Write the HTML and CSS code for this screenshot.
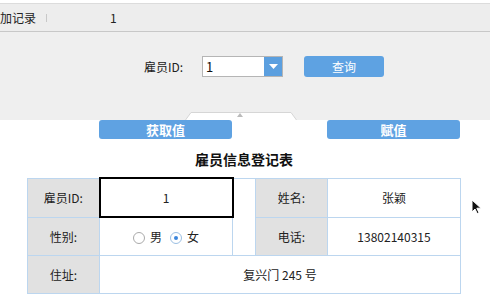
FILE: index.html
```html
<!DOCTYPE html>
<html lang="zh-CN">
<head>
    <meta charset="UTF-8">
    <title>雇员信息登记表</title>
    <link rel="stylesheet" href="styles.css">
</head>
<body>
    <div class="topbar">
        <span class="crumb">加记录</span>
        <span class="sep"></span>
        <span class="crumb-value">1</span>
    </div>
    <div class="query-panel">
        <div class="query-row">
            <label class="query-label">雇员ID:</label>
            <div class="select">
                <span class="select-value">1</span>
                <span class="select-arrow">
                    <svg width="9" height="5" viewBox="0 0 9 5"><path d="M0 0h9L4.5 5z" fill="#fff"/></svg>
                </span>
            </div>
            <button class="btn btn-query">查询</button>
        </div>
        <div class="handle">
            <svg width="112" height="8" viewBox="0 0 112 8">
                <path d="M0.5 8L6 0.5H106L111.5 8" fill="#fff" stroke="#d6d6d6"/>
                <path d="M52 5h6l-3-4z" fill="#bbb"/>
            </svg>
        </div>
    </div>
    <div class="sheet">
        <div class="actions">
            <button class="btn btn-action slot-a">获取值</button>
            <button class="btn btn-action slot-b">赋值</button>
        </div>
        <h1 class="title">雇员信息登记表</h1>
        <table class="form-table">
            <colgroup>
                <col class="c-label"><col class="c-value"><col class="c-gap"><col class="c-label"><col class="c-value">
            </colgroup>
            <tr>
                <td class="label">雇员ID:</td>
                <td class="value focused">1</td>
                <td class="gap" rowspan="2"></td>
                <td class="label">姓名:</td>
                <td class="value">张颖</td>
            </tr>
            <tr>
                <td class="label">性别:</td>
                <td class="value">
                    <span class="radio"></span><span class="radio-text first">男</span><span class="radio checked"></span><span class="radio-text">女</span>
                </td>
                <td class="label">电话:</td>
                <td class="value">13802140315</td>
            </tr>
            <tr>
                <td class="label">住址:</td>
                <td class="value" colspan="4">复兴门 245 号</td>
            </tr>
        </table>
    </div>
    <svg class="cursor" width="10" height="16" viewBox="0 0 10 16">
        <path d="M1 1v12l3-3 2.2 4.6 1.8-.9L5.8 9.2H10z" fill="#111" stroke="#fff" stroke-width="1"/>
    </svg>
</body>
</html>
```

FILE: styles.css
```css
body {
    margin: 0;
    background-color: #fff;
    color: #333;
    font-family: "Noto Sans CJK SC", "Liberation Sans", sans-serif;
    font-size: 12px;
    position: relative;
    overflow: hidden;
}
.topbar {
    margin-top: 3px;
    height: 27px;
    background-color: #ededed;
    border-top: 1px solid #dcdcdc;
    border-bottom: 1px solid #c8c8c8;
    display: flex;
    align-items: center;
    color: #222;
    font-size: 12px;
}
.crumb {
    margin-left: 0;
    width: 46px;
}
.sep {
    width: 1px;
    height: 8px;
    background-color: #c8c8c8;
}
.crumb-value {
    margin-left: 63px;
}
.query-panel {
    background-color: #efefef;
    height: 88px;
    display: flex;
    flex-direction: column;
}
.query-row {
    display: flex;
    align-items: center;
    padding-left: 144px;
    margin-top: 24px;
    height: 21px;
}
.query-label {
    width: 58px;
    color: #222;
}
.select {
    width: 79px;
    height: 19px;
    background-color: #fff;
    border: 1px solid #b5b5b5;
    display: flex;
    align-items: center;
}
.select-value {
    flex: 1;
    padding-left: 3px;
    font-size: 13px;
    color: #111;
}
.select-arrow {
    width: 18px;
    height: 19px;
    background-color: #5b9fdf;
    display: flex;
    align-items: center;
    justify-content: center;
}
.btn {
    border: none;
    border-radius: 3px;
    background-color: #5ea2e2;
    color: #fff;
    font-family: inherit;
    padding: 0;
    cursor: pointer;
}
.btn-query {
    margin-left: 21px;
    width: 80px;
    height: 21px;
    font-size: 12px;
}
.handle {
    margin-top: 35px;
    padding-left: 185px;
    height: 8px;
    line-height: 0;
}
.sheet {
    margin-left: 27px;
    width: 434px;
}
.actions {
    display: grid;
    grid-template-columns: 72px 133px 95px 133px;
    height: 19px;
}
.btn-action {
    height: 19px;
    font-size: 13px;
    font-weight: bold;
    background-color: #5fa2e2;
}
.slot-a {
    grid-column: 2;
}
.slot-b {
    grid-column: 4;
}
.title {
    margin: 0;
    height: 38px;
    line-height: 40px;
    text-align: center;
    font-size: 14px;
    font-weight: bold;
    color: #111;
}
.form-table {
    border-collapse: collapse;
    table-layout: fixed;
    width: 434px;
}
.c-label {
    width: 72px;
}
.c-value {
    width: 133px;
}
.c-gap {
    width: 23px;
}
.form-table td {
    border: 1px solid #bcd6ef;
    height: 37px;
    padding: 0;
    text-align: center;
    color: #222;
}
.form-table td.label {
    background-color: #e1e1e1;
}
.form-table td.focused {
    border: 2px solid #000;
}
.radio {
    display: inline-block;
    width: 10px;
    height: 10px;
    border: 1px solid #aaa;
    border-radius: 50%;
    background-color: #fff;
    vertical-align: -2px;
    position: relative;
}
.radio.checked {
    border-color: #9bbfe3;
}
.radio.checked::after {
    content: "";
    position: absolute;
    left: 3px;
    top: 3px;
    width: 4px;
    height: 4px;
    border-radius: 50%;
    background-color: #3b86dc;
}
.radio-text {
    margin-left: 5px;
}
.radio-text.first {
    margin-right: 8px;
}
.cursor {
    position: absolute;
    left: 471px;
    top: 199px;
}
```
